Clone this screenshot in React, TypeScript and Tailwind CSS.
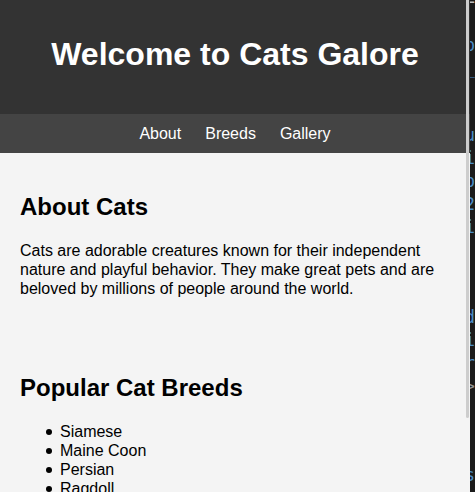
const links = [
  { label: "About", href: "#about" },
  { label: "Breeds", href: "#breeds" },
  { label: "Gallery", href: "#gallery" },
];

const breeds = ["Siamese", "Maine Coon", "Persian", "Ragdoll", "Bengal"];

// Last visible column of the code editor behind the preview pane.
const editorColumn = [
  "=", "", "p", "_", "", "", "u", "i", "p", "2", "i",
  "", "", "", "d", "i", "r", ">", "", "", "", "s",
];

function glyphColor(glyph: string) {
  if (glyph === "=") return "text-[#c0c0c0]";
  if (glyph === ">") return "text-[#909090]";
  return "text-[#4a8cc6]";
}

export default function App() {
  return (
    <div className="flex h-screen overflow-hidden bg-[#1b1b1b] font-['Liberation_Sans',Arial,sans-serif] text-base leading-[19px] text-black">
      <div className="relative min-w-0 flex-1 overflow-hidden bg-[#f4f4f4]">
        <header className="bg-[#333333] px-5 pt-9 pb-[42px] text-center text-white">
          <h1 className="text-[32px] leading-9 font-bold">Welcome to Cats Galore</h1>
        </header>
        <nav className="flex justify-center gap-6 bg-[#444444] py-[10px] text-white">
          {links.map((link) => (
            <a key={link.href} href={link.href}>
              {link.label}
            </a>
          ))}
        </nav>
        <main>
          <section id="about" className="px-5 pt-10 pb-9">
            <h2 className="mb-5 text-2xl leading-7 font-bold">About Cats</h2>
            <p>
              Cats are adorable creatures known for their independent nature and playful behavior.
              They make great pets and are beloved by millions of people around the world.
            </p>
          </section>
          <section id="breeds" className="px-5 pt-10 pb-9">
            <h2 className="mb-5 text-2xl leading-7 font-bold">Popular Cat Breeds</h2>
            <ul className="pl-[26px]">
              {breeds.map((breed) => (
                <li
                  key={breed}
                  className="flex items-center gap-2 before:size-[6px] before:rounded-full before:bg-black"
                >
                  {breed}
                </li>
              ))}
            </ul>
          </section>
        </main>
        <div className="absolute top-0 right-[1px] h-[85%] w-[3px] rounded-b-sm bg-[#cdcdcd]" />
      </div>
      <div className="w-[5px] shrink-0 overflow-hidden" aria-hidden="true">
        <div className="-mt-[11px] flex h-[498px] flex-col font-['DejaVu_Sans_Mono',monospace] text-[17px] leading-[23px]">
          {editorColumn.map((glyph, row) => (
            <div key={row} className={`flex flex-1 items-center justify-end ${glyphColor(glyph)}`}>
              {glyph}
            </div>
          ))}
        </div>
      </div>
    </div>
  );
}
